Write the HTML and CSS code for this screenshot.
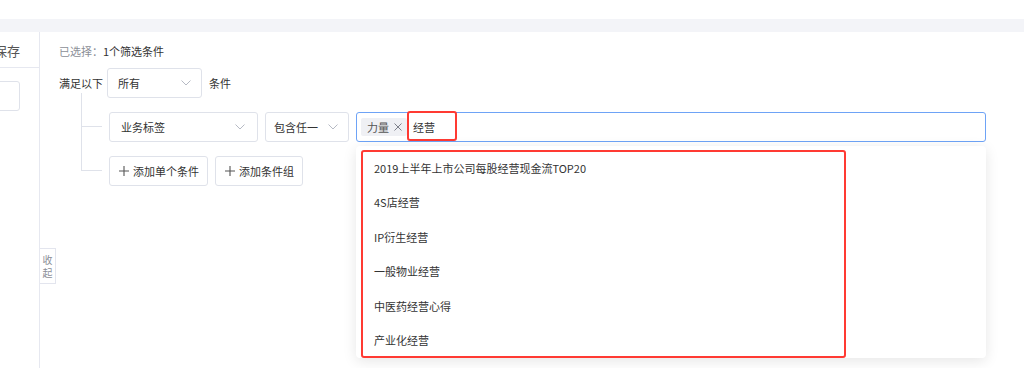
FILE: index.html
```html
<!DOCTYPE html>
<html lang="zh-CN">
  <head>
    <meta charset="UTF-8" />
    <title>筛选条件</title>
    <link rel="stylesheet" href="styles.css">
  </head>
  <body>
    <div class="topbar"></div>
    <div class="band"></div>
    <div class="main">
      <div class="side">
        <div class="side-head"><span class="save">保存</span></div>
        <div class="side-input"></div>
      </div>
      <div class="content">
        <div class="collapse"><span>收</span><span>起</span></div>
        <div class="selected">已选择：<b>1个筛选条件</b></div>

        <div class="match-row">
          <span class="match-label">满足以下</span>
          <div class="select sel-all">
            <span>所有</span>
            <svg class="chev" width="10" height="6" viewBox="0 0 10 6"><path d="M0.5 0.5 L5 5 L9.5 0.5" fill="none" stroke="#b6bac4" stroke-width="1" /></svg>
          </div>
          <span class="match-tail">条件</span>
        </div>

        <div class="group">
          <div class="cond-row first">
            <div class="branch"><div class="b-top"></div><div class="b-rest"></div></div>
            <div class="controls">
              <div class="select sel-field">
                <span>业务标签</span>
                <svg class="chev" width="10" height="6" viewBox="0 0 10 6"><path d="M0.5 0.5 L5 5 L9.5 0.5" fill="none" stroke="#b6bac4" stroke-width="1" /></svg>
              </div>
              <div class="select sel-op">
                <span>包含任一</span>
                <svg class="chev" width="10" height="6" viewBox="0 0 10 6"><path d="M0.5 0.5 L5 5 L9.5 0.5" fill="none" stroke="#b6bac4" stroke-width="1" /></svg>
              </div>
              <div class="tag-input">
                <span class="tag">力量
                  <svg class="tag-x" width="8" height="8" viewBox="0 0 8 8"><path d="M0.5 0.5 L7.5 7.5 M7.5 0.5 L0.5 7.5" stroke="#7d808a" stroke-width="1" /></svg>
                </span>
                <span class="typed">经营</span>
                <div class="mark mark-typed"></div>

                <div class="dropdown">
                  <div class="option">2019上半年上市公司每股经营现金流TOP20</div>
                  <div class="option">4S店经营</div>
                  <div class="option">IP衍生经营</div>
                  <div class="option">一般物业经营</div>
                  <div class="option">中医药经营心得</div>
                  <div class="option">产业化经营</div>
                </div>
                <div class="mark mark-list"></div>
              </div>
            </div>
          </div>
          <div class="cond-row last">
            <div class="branch"><div class="b-top"></div></div>
            <div class="controls">
              <button class="add-btn">
                <svg width="10" height="10" viewBox="0 0 10 10"><path d="M5 0 V10 M0 5 H10" stroke="#555" stroke-width="1.1" /></svg>
                <span>添加单个条件</span>
              </button>
              <button class="add-btn">
                <svg width="10" height="10" viewBox="0 0 10 10"><path d="M5 0 V10 M0 5 H10" stroke="#555" stroke-width="1.1" /></svg>
                <span>添加条件组</span>
              </button>
            </div>
          </div>
        </div>
      </div>
    </div>
  </body>
</html>
```

FILE: styles.css
```css
body {
  margin: 0;
  width: 1024px;
  height: 368px;
  overflow: hidden;
  background: #fff;
  font-family: "Noto Sans CJK SC", "Noto Sans", sans-serif;
  font-size: 11px;
  color: #333;
}
.topbar {
  height: 19px;
}
.band {
  height: 13px;
  background: #f3f4f8;
}
.main {
  display: flex;
  height: 336px;
}
.side {
  width: 39px;
  border-right: 1px solid #e6e8f0;
  overflow: hidden;
}
.side-head {
  height: 36px;
  border-bottom: 1px solid #e6e8f0;
  display: flex;
  align-items: center;
  justify-content: flex-end;
  padding-right: 19px;
  padding-top: 1px;
  box-sizing: border-box;
}
.save {
  font-size: 13px;
  color: #555;
  white-space: nowrap;
}
.side-input {
  margin-top: 13px;
  margin-left: -10px;
  width: 30px;
  height: 30px;
  box-sizing: border-box;
  border: 1px solid #dfe2ea;
  border-radius: 3px;
}
.content {
  position: relative;
  flex: 1;
  padding-left: 19px;
}
.collapse {
  position: absolute;
  left: 0;
  top: 216px;
  width: 16px;
  height: 36px;
  box-sizing: border-box;
  border: 1px solid #e3e5ee;
  border-left: none;
  font-size: 10px;
  line-height: 13px;
  color: #8a8d96;
  display: flex;
  flex-direction: column;
  align-items: center;
  justify-content: center;
}
.selected {
  padding-top: 10px;
  height: 18px;
  line-height: 18px;
  color: #8c8f97;
}
.selected b {
  font-weight: normal;
  color: #333;
}
.match-row {
  margin-top: 8px;
  display: flex;
  align-items: center;
  height: 30px;
}
.match-label {
  width: 48px;
}
.match-tail {
  margin-left: 7px;
}
.select {
  height: 30px;
  box-sizing: border-box;
  border: 1px solid #dfe2ea;
  border-radius: 3px;
  display: flex;
  align-items: center;
  justify-content: space-between;
  padding: 0 10px 0 10px;
}
.sel-all {
  width: 95px;
}
.sel-field {
  width: 149px;
  padding-left: 11px;
  padding-right: 12px;
}
.sel-op {
  width: 84px;
  padding-left: 8px;
}
.group {
  margin-top: -5px;
  padding-left: 22px;
}
.cond-row {
  display: flex;
}
.branch {
  width: 21px;
  margin-right: 7px;
  display: flex;
  flex-direction: column;
}
.b-top {
  border-left: 1px solid #dfe2ea;
  border-bottom: 1px solid #dfe2ea;
  height: 33px;
}
.last .b-top {
  height: 28px;
}
.b-rest {
  flex: 1;
  border-left: 1px solid #dfe2ea;
}
.controls {
  display: flex;
  gap: 7px;
  padding-top: 19px;
}
.last .controls {
  padding-top: 14px;
}
.tag-input {
  position: relative;
  width: 630px;
  height: 30px;
  box-sizing: border-box;
  border: 1px solid #6ea3f6;
  border-radius: 3px;
  display: flex;
  align-items: center;
  padding-left: 4px;
}
.tag {
  height: 18px;
  background: #eff0f4;
  border-radius: 2px;
  padding: 0 5px 0 6px;
  color: #555;
  display: flex;
  align-items: center;
  gap: 5px;
}
.typed {
  margin-left: 6px;
}
.dropdown {
  position: absolute;
  left: -1px;
  top: 33px;
  width: 630px;
  height: 212px;
  overflow: hidden;
  box-sizing: border-box;
  padding-top: 5px;
  background: #fff;
  border-radius: 4px;
  box-shadow: 0 3px 14px rgba(0, 0, 0, 0.1);
}
.option {
  height: 34.4px;
  line-height: 34.4px;
  padding-left: 18px;
  color: #333;
}
.mark {
  position: absolute;
  border: 2px solid #ff3a33;
  border-radius: 3px;
  box-sizing: border-box;
}
.mark-typed {
  left: 50px;
  top: -2px;
  width: 50px;
  height: 30px;
}
.mark-list {
  left: 4px;
  top: 37px;
  width: 485px;
  height: 208px;
}
.add-btn {
  height: 30px;
  box-sizing: border-box;
  border: 1px solid #dfe2ea;
  border-radius: 3px;
  background: #fff;
  font-family: inherit;
  font-size: 11px;
  color: #333;
  display: flex;
  align-items: center;
  gap: 4px;
  padding: 0 8px 0 9px;
  white-space: nowrap;
}
```
